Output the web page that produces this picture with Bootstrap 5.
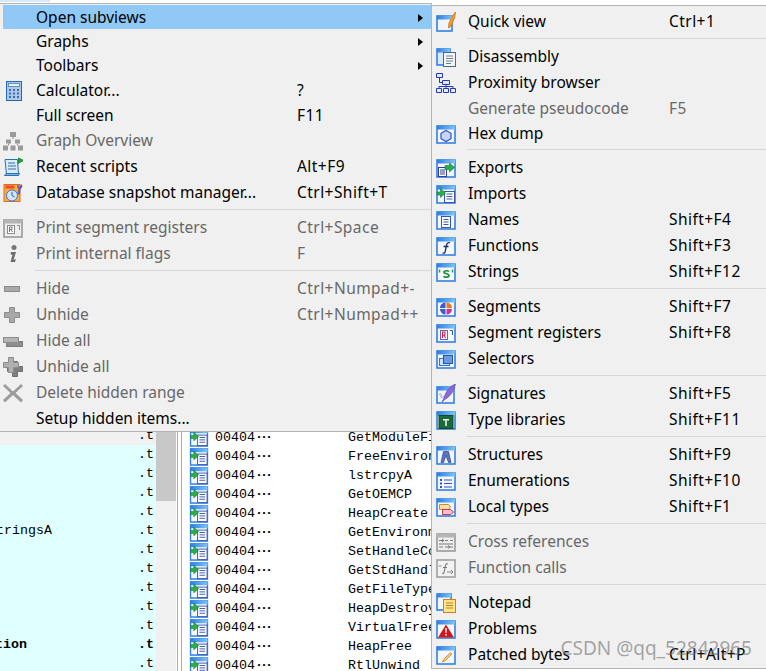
<!DOCTYPE html>
<html lang="en">
<head>
    <meta charset="UTF-8">
    <title>IDA View menu</title>
    <link rel="stylesheet" href="https://cdn.jsdelivr.net/npm/bootstrap@5.3.3/dist/css/bootstrap.min.css">
    <style>
        html, body { height: 671px; overflow: hidden; background: #fff; }
        .screen { height: 671px; overflow: hidden; font-family: "Liberation Mono", monospace; font-size: 13.33px; color: #000; }
        .top-tab { height: 2px; width: 50px; margin-bottom: 1px; background: #d5e8f8; flex: none; }
        .panes { flex: 1; min-height: 0; }

        /* background listing */
        .names-pane { width: 156px; padding-top: 423px; background: #e0ffff; overflow: hidden; flex: none; }
        .names-row { height: 19px; line-height: 19px; white-space: nowrap; }
        .names-row.first { background: #f0f0f0; }
        .name-cut { width: 138px; overflow: hidden; flex: none; }
        .clip-a { margin-left: -12px; }
        .clip-b { margin-left: -5px; }
        .scroll-track { width: 20px; background: #f0f0f0; flex: none; }
        .scroll-thumb { height: 498px; background: #c8c8c8; }
        .splitter { width: 5px; margin-left: 1px; border-left: 1px solid #a9a9a9; border-right: 1px solid #a9a9a9; flex: none; }
        .list-pane { padding-top: 425px; padding-left: 7px; overflow: hidden; flex: 1; }
        .list-row { height: 19px; line-height: 19px; white-space: nowrap; }
        .list-ico { width: 20px; height: 19px; flex: none; }
        .addr-col { width: 133px; margin-left: 6px; flex: none; }
        .dots { letter-spacing: -3px; font-weight: 700; }

        /* popup menus */
        .ida-menu {
            --bs-dropdown-link-disabled-color: #686868;
            display: block;
            min-width: 0;
            margin: 0;
            background: #f0f0f0;
            border: 1px solid #b4b4b4;
            border-radius: 0;
            font-family: "Noto Sans", sans-serif;
            font-size: 15.5px;
            color: #000;
        }
        .menu-main { left: -1px; top: 3px; width: 433px; height: 429px; padding: 1px 0 0 3px; }
        .menu-sub { left: 431px; top: 5px; width: 340px; height: 664px; padding: 2px 0 0 1px; }
        .ida-menu .dropdown-item { display: flex; align-items: center; padding: 2px 0 0; color: #000; background: none; }
        .ida-menu .dropdown-item.disabled { color: #686868; }
        .ida-menu .dropdown-item.active { background: #90c8f6; color: #000; }
        .ida-menu .dropdown-divider { margin: 4px 0 4px 32px; height: 1px; border-top: 1px solid #d6d6d6; opacity: 1; }
        .menu-sub .dropdown-divider { margin-left: 34px; }
        .rh24 { height: 24px; }
        .rh25 { height: 25px; }
        .rh26 { height: 26px; }
        .ico-col { width: 33px; flex: none; }
        .menu-sub .ico-col { width: 35px; padding-left: 3px; }
        .ico-col svg { display: block; width: 20px; height: 20px; }
        .label-col { width: 261px; flex: none; }
        .menu-sub .label-col { width: 201px; }
        .keys-col { letter-spacing: .45px; }
        .arrow-right { width: 0; height: 0; border-left: 5px solid #000; border-top: 4px solid transparent; border-bottom: 4px solid transparent; margin-left: auto; margin-right: 8px; }
        .csdn-mark { right: 14px; top: 635px; z-index: 1100; font-family: "Noto Sans", sans-serif; font-size: 19px; line-height: 26px; color: rgba(110,110,110,.6); white-space: nowrap; }
    </style>
</head>
<body>
<svg width="0" height="0" class="position-absolute">
    <defs>
        <linearGradient id="titlebar" x1="0" y1="0" x2="1" y2="0">
            <stop offset="0" stop-color="#2f7fe0"/>
            <stop offset="1" stop-color="#7cc4f8"/>
        </linearGradient>
        <symbol id="win" viewBox="0 0 20 20">
            <rect x="1" y="2" width="18" height="17" fill="#f4f8fd" stroke="#3480e4" stroke-width="1.600"/>
            <rect x="1" y="1.500" width="18" height="4" fill="url(#titlebar)"/>
        </symbol>
        <symbol id="gwin" viewBox="0 0 20 20">
            <rect x="1" y="2" width="18" height="17" fill="#eee" stroke="#9a9a9a" stroke-width="1.600"/>
            <rect x="1" y="1.500" width="18" height="4" fill="#b4b4b4"/>
        </symbol>
        <symbol id="doc" viewBox="0 0 20 20">
            <rect x="8.500" y="7.500" width="10" height="11" fill="#fff" stroke="#3a58b0"/>
            <path d="M10.500 10h6M10.500 12.500h6M10.500 15h6" stroke="#3a58b0"/>
        </symbol>
        <symbol id="i-calc" viewBox="0 0 20 20">
            <rect x="3.500" y=".5" width="15" height="19" fill="#a8c8ec" stroke="#2468b8"/>
            <rect x="5.500" y="2.500" width="11" height="3" fill="#e8f0f8" stroke="#6a8cb0"/>
            <path d="M6 8h2v2H6zM10 8h2v2h-2zM14 8h2v2h-2zM6 11.500h2v2H6zM10 11.500h2v2h-2zM14 11.500h2v2h-2zM6 15h2v2H6zM10 15h2v2h-2zM14 15h2v2h-2z" fill="#4a6a98"/>
        </symbol>
        <symbol id="i-tree-g" viewBox="0 0 20 20">
            <path d="M7 1h6v5H7zM3 8.500h5v4H3zM12 8.500h5v4h-5zM0 14.500h5v5H0zM7.500 14.500h5v5h-5zM15 14.500h5v5h-5z" fill="#9a9a9a"/>
            <path d="M10 6v2M5.500 12.500v2M14.500 12.500v2" stroke="#8a8a8a"/>
        </symbol>
        <symbol id="i-script" viewBox="0 0 20 20">
            <path d="M2 2.500h12.500l1 15H3.500z" fill="#dcebf8" stroke="#2d6fb4"/>
            <path d="M1.500 18.500h14l1-2H3z" fill="#7fb2e0" stroke="#2d6fb4"/>
            <path d="M5 6h7M5 9h8M5 12h8" stroke="#2d6fb4"/>
            <path d="M15.500 1v6M15.500 1l5 2.500-5 2.500z" fill="#26a644" stroke="#1a8a33"/>
        </symbol>
        <symbol id="i-snap" viewBox="0 0 20 20">
            <rect x="1" y="1.500" width="16" height="17" fill="#f9a84a" stroke="#d8701c"/>
            <rect x="2.500" y="2.500" width="9" height="3" fill="#f04a28"/>
            <circle cx="9" cy="12.500" r="5.500" fill="#cfe6fa" stroke="#3878c8"/>
            <path d="M9 9v3.500l2.500 1.500" fill="none" stroke="#285aa0"/>
            <path d="M15 1l1.500 3 2-3 1 2.500-2 3-.5 5-2.500-.5 1-5-1.500-2z" fill="#6a5aa8"/>
        </symbol>
        <symbol id="i-segreg-g" viewBox="0 0 20 20">
            <use href="#gwin"/>
            <rect x="4.500" y="7.500" width="7" height="8" fill="#fff" stroke="#8a8a8a"/>
            <path d="M6.500 14v-5h2.500v2.500H6.500M8 11.500l1.500 2.500" fill="none" stroke="#777"/>
            <path d="M14 7.500h2.500V12" fill="none" stroke="#8a8a8a"/>
        </symbol>
        <symbol id="i-info" viewBox="0 0 20 20">
            <circle cx="11" cy="3.500" r="2.500" fill="#777"/>
            <path d="M8 8h5l-2.500 8 2.500-1-1 3H7.500l2-7.500H7.500z" fill="#6a6a6a"/>
        </symbol>
        <symbol id="i-minus" viewBox="0 0 20 20"><rect x="1.500" y="7.500" width="15" height="5" fill="#a8a8a8" stroke="#8c8c8c"/></symbol>
        <symbol id="i-plus" viewBox="0 0 20 20"><path d="M6.500 2.500h5v5h5v5h-5v5h-5v-5h-5v-5h5z" fill="#a8a8a8" stroke="#8c8c8c"/></symbol>
        <symbol id="i-minus2" viewBox="0 0 20 20">
            <rect x="3.500" y="10.500" width="16" height="5" fill="#8e8e8e" stroke="#7c7c7c"/>
            <rect x=".5" y="6.500" width="15" height="5" fill="#b4b4b4" stroke="#8c8c8c"/>
        </symbol>
        <symbol id="i-plus2" viewBox="0 0 20 20">
            <path d="M9.500 4.500h5v5h5v5h-5v5h-5v-5h-5v-5h5z" fill="#808080" stroke="#707070"/>
            <path d="M5.500 .5h5v5h5v5h-5v5h-5v-5h-5v-5h5z" fill="#b0b0b0" stroke="#8c8c8c"/>
        </symbol>
        <symbol id="i-x" viewBox="0 0 20 20"><path d="M2 1l8 7.500L18 1l2 2-7.500 7 7.500 7-2 2.500-8-7.500-8 7.500L0 17l7.500-7L0 3z" fill="#9c9c9c"/></symbol>
        <symbol id="i-quick" viewBox="0 0 20 20">
            <rect x="1" y="4" width="15" height="15" fill="#eef5fc" stroke="#3480e4" stroke-width="1.600"/>
            <rect x="1" y="3.500" width="15" height="4" fill="url(#titlebar)"/>
            <path d="M19.500 0l-1 6-3.500 8-2.500 2 .5-5 3-6z" fill="#f4a020" stroke="#d86a10" stroke-width=".8"/>
        </symbol>
        <symbol id="i-disasm" viewBox="0 0 20 20">
            <rect x="1" y="2" width="13" height="16" fill="#d8eafa" stroke="#3480e4" stroke-width="1.600"/>
            <rect x="1" y="1.500" width="13" height="4" fill="url(#titlebar)"/>
            <rect x="7.500" y="5.500" width="12" height="14" fill="#f6f6f6" stroke="#44699c"/>
            <path d="M10 9h7M10 11.500h7M10 14h7M10 16.500h5" stroke="#6a7f9c"/>
        </symbol>
        <symbol id="i-tree" viewBox="0 0 20 20">
            <path d="M.5 .5h6v4h-6zM6.500 7.500h7v4h-7zM.5 15.500h5v4h-5zM7.500 15.500h5v4h-5zM14.500 15.500h5v4h-5z" fill="#e4ecfa" stroke="#2438c0"/>
            <path d="M3.500 4.500V9.500h3M10 11.500v4M3 15.500v-2h14v2" fill="none" stroke="#2438c0"/>
        </symbol>
        <symbol id="i-hex" viewBox="0 0 20 20">
            <use href="#win"/>
            <path d="M10 6.500l5 2.800v5.400l-5 2.800-5-2.800V9.300z" fill="#c8d4f8" stroke="#2c50d0" stroke-width="1.200"/>
        </symbol>
        <symbol id="i-exports" viewBox="0 0 20 20">
            <use href="#win"/>
            <rect x="2.500" y="9.500" width="8" height="9" fill="#fff" stroke="#2f3f98"/>
            <path d="M4 12h5M4 14h5M4 16h5" stroke="#2f3f98"/>
            <path d="M9 7.500h4.500V5l5 4.500-5 4.500v-2.500H9z" fill="#27b04a" stroke="#127a2e" stroke-width=".6"/>
        </symbol>
        <symbol id="i-imports" viewBox="0 0 20 20">
            <use href="#win"/>
            <use href="#doc"/>
            <path d="M1 8h3.500V4.500L9.500 9l-5 4.500V11H1z" fill="#27b04a" stroke="#127a2e" stroke-width=".6"/>
        </symbol>
        <symbol id="i-names" viewBox="0 0 20 20">
            <use href="#win"/>
            <rect x="5.500" y="6.500" width="9" height="11" fill="#fff" stroke="#3a58b0"/>
            <path d="M7.500 9.500h5M7.500 12h5M7.500 14.500h5" stroke="#3a58b0"/>
        </symbol>
        <symbol id="i-func" viewBox="0 0 20 20">
            <use href="#win"/>
            <path d="M14 7c-2-.8-3 0-3.400 2L9.200 15.500c-.4 1.700-1.200 2-2.700 1.500M7.500 10.500h5" fill="none" stroke="#1c2c60" stroke-width="1.300"/>
        </symbol>
        <symbol id="i-str" viewBox="0 0 20 20">
            <use href="#win"/>
            <path d="M13 9.500c-1-1-5-1.200-5 .7s5 1.300 5 3.400c0 2-4.500 2-5.500.6" fill="none" stroke="#1f8a34" stroke-width="1.700"/>
            <path d="M3.500 7.500v3M16.500 7.500v3" stroke="#2f9a44" stroke-width="1.500"/>
        </symbol>
        <symbol id="i-seg" viewBox="0 0 20 20">
            <use href="#win"/>
            <path d="M9.500 11V5.500A5.500 5.500 0 0 0 4 11z" fill="#3a5ad0"/>
            <path d="M10.500 11V5.500A5.500 5.500 0 0 1 16 11z" fill="#f07818"/>
            <path d="M9.500 12v5.500A5.500 5.500 0 0 1 4 12z" fill="#3a5ad0"/>
            <path d="M10.500 12v5.500A5.500 5.500 0 0 0 16 12z" fill="#d0309a"/>
        </symbol>
        <symbol id="i-segreg" viewBox="0 0 20 20">
            <use href="#win"/>
            <rect x="4.500" y="7.500" width="7" height="9" fill="#fff" stroke="#7a5ab0"/>
            <path d="M6.500 15v-6h2.500v3H6.500M8 12l1.500 3" fill="none" stroke="#c02060" stroke-width="1.100"/>
            <path d="M14 7.500h2.500V12" fill="none" stroke="#3a58b0"/>
        </symbol>
        <symbol id="i-sel" viewBox="0 0 20 20">
            <use href="#win"/>
            <rect x="3.500" y="9.500" width="10" height="7" fill="#cfe2f8" stroke="#2c74d8"/>
            <rect x="7.500" y="6.500" width="9" height="8" fill="#6a9ce0" stroke="#2c50a8"/>
        </symbol>
        <symbol id="i-sign" viewBox="0 0 20 20">
            <rect x="1" y="3" width="17" height="16" fill="#f0f5fb" stroke="#3480e4" stroke-width="1.600"/>
            <rect x="1" y="2.500" width="17" height="4" fill="url(#titlebar)"/>
            <path d="M3 11c1-2 3-1 2 1s2 2 3 0" fill="none" stroke="#9aa0a8"/>
            <path d="M19.500 0C14 2 10 7 8 14l-2 4 3.500-3C15 12 18 6 19.500 0z" fill="#8a6ad8" stroke="#5a3aa8" stroke-width=".6"/>
        </symbol>
        <symbol id="i-tlib" viewBox="0 0 20 20">
            <use href="#win"/>
            <rect x="3" y="5.500" width="14" height="13" fill="#1c6a38" stroke="#0e4a24"/>
            <path d="M7 9h6v1.500H10.800V16H9.200V10.500H7z" fill="#e8f4e8"/>
        </symbol>
        <symbol id="i-struct" viewBox="0 0 20 20">
            <use href="#win"/>
            <path d="M7.500 6.500h5l2.500 11h-2.500l-2.500-7-2.500 7H5z" fill="#5a78c0" stroke="#24408c" stroke-width=".7"/>
        </symbol>
        <symbol id="i-enum" viewBox="0 0 20 20">
            <use href="#win"/>
            <path d="M4 8h2v2H4zM4 11.500h2v2H4zM4 15h2v2H4z" fill="#2c50d0"/>
            <path d="M8 9h8M8 12.500h8M8 16h8" stroke="#2c50d0"/>
        </symbol>
        <symbol id="i-local" viewBox="0 0 20 20">
            <use href="#win"/>
            <path d="M3.500 7.500h9l2 2.500-2 2.500h-9z" fill="#fbe3a8" stroke="#d88428"/>
            <path d="M6.500 12.500h8l3 2.500-3 2.500h-8z" fill="#fbc4cc" stroke="#d03048"/>
        </symbol>
        <symbol id="i-xref" viewBox="0 0 20 20">
            <use href="#gwin"/>
            <path d="M3 8.500h4M9 8.500h3M14 8.500h3M3 15h4M9 15h8M6 7l2 1.500L6 10M12 13.500l2 1.500-2 1.500M3 12h14" fill="none" stroke="#7a7a7a"/>
        </symbol>
        <symbol id="i-fcalls" viewBox="0 0 20 20">
            <rect x="1" y="2" width="18" height="17" fill="#f2f2f2" stroke="#a0a0a0" stroke-width="1.600"/>
            <path d="M12 6c-1.500-.5-2.300 0-2.600 1.500L8.200 14c-.3 1.300-1 1.600-2 1.300M7 9.500h4" fill="none" stroke="#777" stroke-width="1.100"/>
            <path d="M2.500 8h3M11 14h6M15 12l2 2-2 2" fill="none" stroke="#888"/>
        </symbol>
        <symbol id="i-note" viewBox="0 0 20 20">
            <rect x="1" y="1" width="14" height="16" fill="#f0f6fc" stroke="#3480e4" stroke-width="1.600"/>
            <rect x="1" y=".5" width="14" height="4" fill="url(#titlebar)"/>
            <rect x="7.500" y="6.500" width="12" height="13" fill="#fde48a" stroke="#e07a18"/>
            <path d="M10 10h7M10 12.500h7M10 15h7" stroke="#b88820"/>
        </symbol>
        <symbol id="i-problem" viewBox="0 0 20 20">
            <use href="#win"/>
            <path d="M10 5.500l8 13H2z" fill="#d01818"/>
            <path d="M9.200 9h1.600l-.3 5h-1zM9.200 15h1.600v1.600H9.200z" fill="#fff"/>
        </symbol>
        <symbol id="i-patch" viewBox="0 0 20 20">
            <use href="#win"/>
            <path d="M14.500 7.500l1.500 1.500-7 7-2.500 1 1-2.500z" fill="#f0c878" stroke="#d89a40"/>
        </symbol>
    </defs>
</svg>

<div class="screen position-relative d-flex flex-column">
    <div class="top-tab"></div>
    <div class="panes d-flex">
        <div class="names-pane" id="names-pane"></div>
        <div class="scroll-track"><div class="scroll-thumb"></div></div>
        <div class="splitter"></div>
        <div class="list-pane" id="list-pane"></div>
    </div>

    <ul class="dropdown-menu ida-menu menu-main list-unstyled position-absolute">
        <li><a class="dropdown-item active rh24"><span class="ico-col"></span><span class="label-col">Open subviews</span><span class="arrow-right"></span></a></li>
        <li><a class="dropdown-item rh24"><span class="ico-col"></span><span class="label-col">Graphs</span><span class="arrow-right"></span></a></li>
        <li><a class="dropdown-item rh24"><span class="ico-col"></span><span class="label-col">Toolbars</span><span class="arrow-right"></span></a></li>
        <li><a class="dropdown-item rh25"><span class="ico-col"><svg><use href="#i-calc"/></svg></span><span class="label-col">Calculator...</span><span class="keys-col">?</span></a></li>
        <li><a class="dropdown-item rh25"><span class="ico-col"></span><span class="label-col">Full screen</span><span class="keys-col">F11</span></a></li>
        <li><a class="dropdown-item disabled rh26"><span class="ico-col"><svg><use href="#i-tree-g"/></svg></span><span class="label-col">Graph Overview</span></a></li>
        <li><a class="dropdown-item rh26"><span class="ico-col"><svg><use href="#i-script"/></svg></span><span class="label-col">Recent scripts</span><span class="keys-col">Alt+F9</span></a></li>
        <li><a class="dropdown-item rh26"><span class="ico-col"><svg><use href="#i-snap"/></svg></span><span class="label-col">Database snapshot manager...</span><span class="keys-col">Ctrl+Shift+T</span></a></li>
        <li><hr class="dropdown-divider"></li>
        <li><a class="dropdown-item disabled rh26"><span class="ico-col"><svg><use href="#i-segreg-g"/></svg></span><span class="label-col">Print segment registers</span><span class="keys-col">Ctrl+Space</span></a></li>
        <li><a class="dropdown-item disabled rh26"><span class="ico-col"><svg><use href="#i-info"/></svg></span><span class="label-col">Print internal flags</span><span class="keys-col">F</span></a></li>
        <li><hr class="dropdown-divider"></li>
        <li><a class="dropdown-item disabled rh26"><span class="ico-col"><svg><use href="#i-minus"/></svg></span><span class="label-col">Hide</span><span class="keys-col">Ctrl+Numpad+-</span></a></li>
        <li><a class="dropdown-item disabled rh26"><span class="ico-col"><svg><use href="#i-plus"/></svg></span><span class="label-col">Unhide</span><span class="keys-col">Ctrl+Numpad++</span></a></li>
        <li><a class="dropdown-item disabled rh26"><span class="ico-col"><svg><use href="#i-minus2"/></svg></span><span class="label-col">Hide all</span></a></li>
        <li><a class="dropdown-item disabled rh26"><span class="ico-col"><svg><use href="#i-plus2"/></svg></span><span class="label-col">Unhide all</span></a></li>
        <li><a class="dropdown-item disabled rh26"><span class="ico-col"><svg><use href="#i-x"/></svg></span><span class="label-col">Delete hidden range</span></a></li>
        <li><a class="dropdown-item rh25"><span class="ico-col"></span><span class="label-col">Setup hidden items...</span></a></li>
    </ul>

    <ul class="dropdown-menu ida-menu menu-sub list-unstyled position-absolute">
        <li><a class="dropdown-item rh26"><span class="ico-col"><svg><use href="#i-quick"/></svg></span><span class="label-col">Quick view</span><span class="keys-col">Ctrl+1</span></a></li>
        <li><hr class="dropdown-divider"></li>
        <li><a class="dropdown-item rh26"><span class="ico-col"><svg><use href="#i-disasm"/></svg></span><span class="label-col">Disassembly</span></a></li>
        <li><a class="dropdown-item rh26"><span class="ico-col"><svg><use href="#i-tree"/></svg></span><span class="label-col">Proximity browser</span></a></li>
        <li><a class="dropdown-item disabled rh25"><span class="ico-col"></span><span class="label-col">Generate pseudocode</span><span class="keys-col">F5</span></a></li>
        <li><a class="dropdown-item rh25"><span class="ico-col"><svg><use href="#i-hex"/></svg></span><span class="label-col">Hex dump</span></a></li>
        <li><hr class="dropdown-divider"></li>
        <li><a class="dropdown-item rh26"><span class="ico-col"><svg><use href="#i-exports"/></svg></span><span class="label-col">Exports</span></a></li>
        <li><a class="dropdown-item rh26"><span class="ico-col"><svg><use href="#i-imports"/></svg></span><span class="label-col">Imports</span></a></li>
        <li><a class="dropdown-item rh26"><span class="ico-col"><svg><use href="#i-names"/></svg></span><span class="label-col">Names</span><span class="keys-col">Shift+F4</span></a></li>
        <li><a class="dropdown-item rh26"><span class="ico-col"><svg><use href="#i-func"/></svg></span><span class="label-col">Functions</span><span class="keys-col">Shift+F3</span></a></li>
        <li><a class="dropdown-item rh26"><span class="ico-col"><svg><use href="#i-str"/></svg></span><span class="label-col">Strings</span><span class="keys-col">Shift+F12</span></a></li>
        <li><hr class="dropdown-divider"></li>
        <li><a class="dropdown-item rh26"><span class="ico-col"><svg><use href="#i-seg"/></svg></span><span class="label-col">Segments</span><span class="keys-col">Shift+F7</span></a></li>
        <li><a class="dropdown-item rh26"><span class="ico-col"><svg><use href="#i-segreg"/></svg></span><span class="label-col">Segment registers</span><span class="keys-col">Shift+F8</span></a></li>
        <li><a class="dropdown-item rh26"><span class="ico-col"><svg><use href="#i-sel"/></svg></span><span class="label-col">Selectors</span></a></li>
        <li><hr class="dropdown-divider"></li>
        <li><a class="dropdown-item rh26"><span class="ico-col"><svg><use href="#i-sign"/></svg></span><span class="label-col">Signatures</span><span class="keys-col">Shift+F5</span></a></li>
        <li><a class="dropdown-item rh26"><span class="ico-col"><svg><use href="#i-tlib"/></svg></span><span class="label-col">Type libraries</span><span class="keys-col">Shift+F11</span></a></li>
        <li><hr class="dropdown-divider"></li>
        <li><a class="dropdown-item rh26"><span class="ico-col"><svg><use href="#i-struct"/></svg></span><span class="label-col">Structures</span><span class="keys-col">Shift+F9</span></a></li>
        <li><a class="dropdown-item rh26"><span class="ico-col"><svg><use href="#i-enum"/></svg></span><span class="label-col">Enumerations</span><span class="keys-col">Shift+F10</span></a></li>
        <li><a class="dropdown-item rh26"><span class="ico-col"><svg><use href="#i-local"/></svg></span><span class="label-col">Local types</span><span class="keys-col">Shift+F1</span></a></li>
        <li><hr class="dropdown-divider"></li>
        <li><a class="dropdown-item disabled rh26"><span class="ico-col"><svg><use href="#i-xref"/></svg></span><span class="label-col">Cross references</span></a></li>
        <li><a class="dropdown-item disabled rh26"><span class="ico-col"><svg><use href="#i-fcalls"/></svg></span><span class="label-col">Function calls</span></a></li>
        <li><hr class="dropdown-divider"></li>
        <li><a class="dropdown-item rh26"><span class="ico-col"><svg><use href="#i-note"/></svg></span><span class="label-col">Notepad</span></a></li>
        <li><a class="dropdown-item rh26"><span class="ico-col"><svg><use href="#i-problem"/></svg></span><span class="label-col">Problems</span></a></li>
        <li><a class="dropdown-item rh26"><span class="ico-col"><svg><use href="#i-patch"/></svg></span><span class="label-col">Patched bytes</span><span class="keys-col">Ctrl+Alt+P</span></a></li>
    </ul>

    <div class="csdn-mark position-absolute">CSDN @qq_52842965</div>
</div>

<script>
    // filas del listado de fondo
    const nombres = ["GetModuleFileNameA", "FreeEnvironmentStringsA", "lstrcpyA", "GetOEMCP", "HeapCreate", "GetEnvironmentStringsA", "SetHandleCount", "GetStdHandle", "GetFileType", "HeapDestroy", "VirtualFree", "HeapFree", "RtlUnwind"];

    document.getElementById("names-pane").innerHTML = nombres.map((n, i) => {
        let nombre = "";
        if (i === 5) nombre = '<span class="clip-a d-inline-block">StringsA</span>';
        if (i === 11) nombre = '<span class="clip-b d-inline-block fw-bold">tion</span>';
        const seg = i === 11 ? '<b>.t</b>' : '.t';
        return `<div class="names-row d-flex ${i === 0 ? "first" : ""}"><div class="name-cut">${nombre}</div><div>${seg}</div></div>`;
    }).join("");

    document.getElementById("list-pane").innerHTML = nombres.map(n => `
        <div class="list-row d-flex">
            <svg class="list-ico" viewBox="0 0 20 20"><use href="#i-imports"/></svg>
            <div class="addr-col">00404<span class="dots">···</span></div>
            <div>${n}</div>
        </div>`).join("");
</script>
<script src="https://cdn.jsdelivr.net/npm/bootstrap@5.3.3/dist/js/bootstrap.bundle.min.js"></script>
</body>
</html>
